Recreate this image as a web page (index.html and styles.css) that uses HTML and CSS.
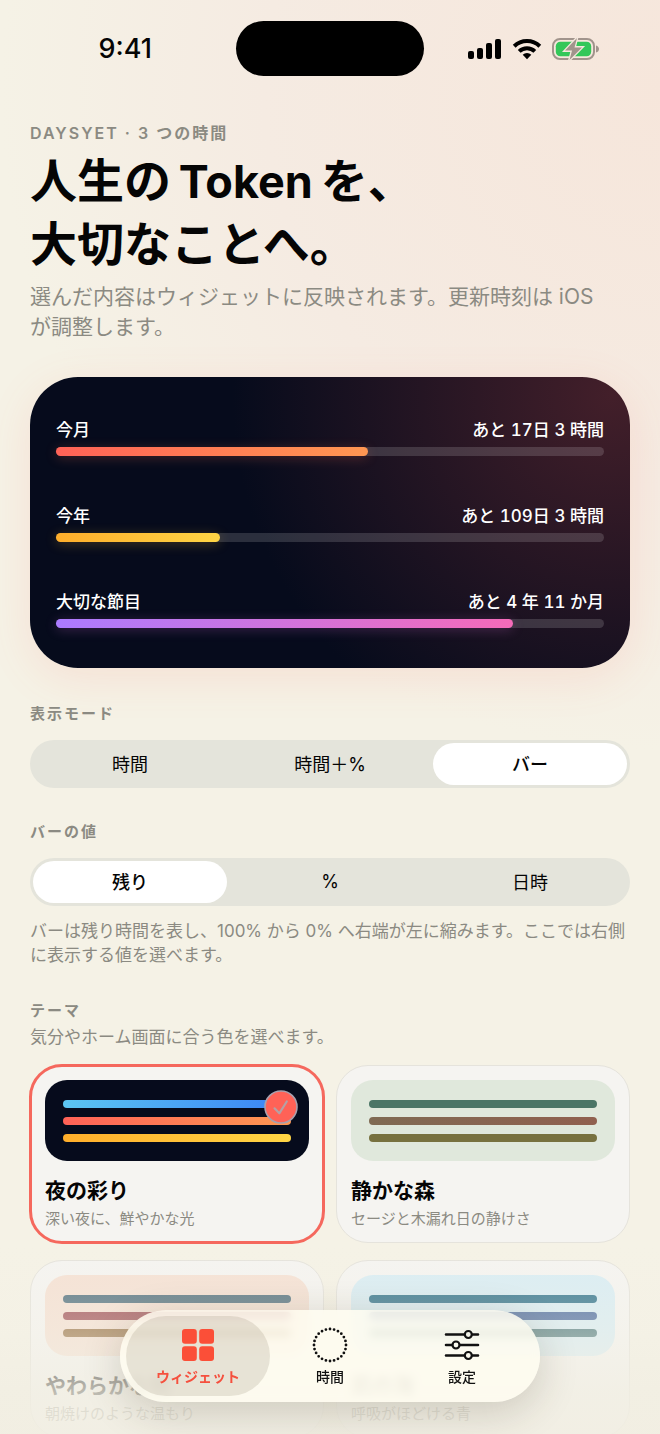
FILE: index.html
```html
<!DOCTYPE html>
<html lang="ja">
<head>
<meta charset="utf-8">
<meta name="viewport" content="width=device-width, initial-scale=1">
<title>DaysYet</title>
<link rel="stylesheet" href="styles.css">
</head>
<body>
<div class="app">
  <div class="status">
    <span class="status-time">9:41</span>
    <span class="island"></span>
    <span class="status-icons">
      <svg width="34" height="22" viewBox="0 0 34 22" aria-hidden="true">
        <rect x="0" y="13" width="6" height="8" rx="2"/>
        <rect x="9" y="10" width="6" height="11" rx="2"/>
        <rect x="18" y="5" width="6" height="16" rx="2"/>
        <rect x="27" y="1" width="6" height="20" rx="2"/>
      </svg>
      <svg width="30" height="22" viewBox="0 0 30 22" aria-hidden="true">
        <g fill="none" stroke="#000" stroke-width="4">
          <path d="M2.2 8.3a18.3 18.3 0 0 1 25.6 0"/>
          <path d="M7.2 13.4a11.2 11.2 0 0 1 15.6 0"/>
        </g>
        <path d="M15 21.2l-4.3-4.4a6.1 6.1 0 0 1 8.6 0z"/>
      </svg>
      <svg width="48" height="24" viewBox="0 0 48 24" aria-hidden="true">
        <rect x="1" y="2" width="41" height="20" rx="7" fill="none" stroke="#a1948c" stroke-width="2"/>
        <rect x="3.8" y="4.800" width="35.400" height="14.400" rx="4.500" fill="#33c759"/>
        <path d="M44 8.500c4 1 4 6 0 7z" fill="#a1948c"/>
        <path d="M25 1L13 13.600h7L17.500 23 30 10.400h-7.500z" fill="#a1948c" stroke="#f5e8dd" stroke-width="2.600" paint-order="stroke"/>
      </svg>
    </span>
  </div>

  <main class="content">
    <header class="intro">
      <p class="eyebrow">DAYSYET · 3 つの時間</p>
      <h1 class="title">人生の <span class="title-latin">Token</span> を、<br>大切なことへ。</h1>
      <p class="lead">選んだ内容はウィジェットに反映されます。更新時刻は iOS<br>が調整します。</p>
    </header>

    <section class="hero" aria-label="プレビュー">
      <div class="meter">
        <div class="meter-head"><span>今月</span><span class="meter-value">あと 17日 3 時間</span></div>
        <div class="track"><div class="fill fill-coral" style="width:57%"></div></div>
      </div>
      <div class="meter">
        <div class="meter-head"><span>今年</span><span class="meter-value">あと 109日 3 時間</span></div>
        <div class="track"><div class="fill fill-gold" style="width:30%"></div></div>
      </div>
      <div class="meter">
        <div class="meter-head"><span>大切な節目</span><span class="meter-value">あと 4 年 11 か月</span></div>
        <div class="track"><div class="fill fill-violet" style="width:83.4%"></div></div>
      </div>
    </section>

    <fieldset class="group">
      <legend class="label">表示モード</legend>
      <div class="segments">
        <label class="segment"><input type="radio" name="mode"><span>時間</span></label>
        <label class="segment"><input type="radio" name="mode"><span>時間＋%</span></label>
        <label class="segment"><input type="radio" name="mode" checked><span>バー</span></label>
      </div>
    </fieldset>

    <fieldset class="group">
      <legend class="label">バーの値</legend>
      <div class="segments">
        <label class="segment"><input type="radio" name="value" checked><span>残り</span></label>
        <label class="segment"><input type="radio" name="value"><span>%</span></label>
        <label class="segment"><input type="radio" name="value"><span>日時</span></label>
      </div>
      <p class="note">バーは残り時間を表し、100% から 0% へ右端が左に縮みます。ここでは右側に表示する値を選べます。</p>
    </fieldset>

    <fieldset class="group">
      <legend class="label">テーマ</legend>
      <p class="theme-note">気分やホーム画面に合う色を選べます。</p>
      <div class="themes">
        <label class="theme">
          <input type="radio" name="theme" checked>
          <span class="swatch night"><i></i><i></i><i></i>
            <svg class="check" viewBox="0 0 34 34" aria-hidden="true"><circle cx="17" cy="17" r="16" fill="#ff6257" stroke="#a9a0ad" stroke-width="1.6"/><path d="M10.5 18.3l4.800 5L22.800 11.500" fill="none" stroke="#b5a0a4" stroke-width="2.200" stroke-linecap="round" stroke-linejoin="round"/></svg>
          </span>
          <span class="theme-name">夜の彩り</span>
          <span class="theme-desc">深い夜に、鮮やかな光</span>
        </label>
        <label class="theme">
          <input type="radio" name="theme">
          <span class="swatch forest"><i></i><i></i><i></i></span>
          <span class="theme-name">静かな森</span>
          <span class="theme-desc">セージと木漏れ日の静けさ</span>
        </label>
        <label class="theme">
          <input type="radio" name="theme">
          <span class="swatch dawn"><i></i><i></i><i></i></span>
          <span class="theme-name">やわらかな朝</span>
          <span class="theme-desc">朝焼けのような温もり</span>
        </label>
        <label class="theme">
          <input type="radio" name="theme">
          <span class="swatch sea"><i></i><i></i><i></i></span>
          <span class="theme-name">凪の海</span>
          <span class="theme-desc">呼吸がほどける青</span>
        </label>
      </div>
    </fieldset>
  </main>

  <div class="fade"></div>
  <nav class="tabs">
    <button class="tab tab-active" type="button" aria-current="page">
      <svg width="36" height="36" viewBox="0 0 36 36" fill="#fb4f38" aria-hidden="true">
        <rect x="2" y="2" width="14.800" height="14.800" rx="3"/><rect x="19.200" y="2" width="14.800" height="14.800" rx="3"/>
        <rect x="2" y="19.200" width="14.800" height="14.800" rx="3"/><rect x="19.200" y="19.200" width="14.800" height="14.800" rx="3"/>
      </svg>
      ウィジェット
    </button>
    <button class="tab" type="button">
      <svg width="36" height="36" viewBox="0 0 36 36" fill="none" stroke="#111" aria-hidden="true">
        <circle cx="18" cy="18" r="16" stroke-width="2.800" stroke-linecap="round" pathLength="120" stroke-dasharray="0 5"/>
      </svg>
      時間
    </button>
    <button class="tab" type="button">
      <svg width="36" height="36" viewBox="0 0 36 36" fill="none" stroke="#111" stroke-width="2.600" stroke-linecap="round" aria-hidden="true">
        <path d="M2 7.500h18M28.500 7.500h5.500M2 18h6M16.500 18h17.500M2 28.500h18M28.500 28.500h5.500"/>
        <g stroke-width="2.200"><circle cx="24.300" cy="7.500" r="3.500"/><circle cx="12" cy="18" r="3.500"/><circle cx="24.300" cy="28.500" r="3.500"/></g>
      </svg>
      設定
    </button>
  </nav>
</div>
</body>
</html>
```
FILE: styles.css
```css
* { box-sizing: border-box; }

body {
  margin: 0;
  color: #050505;
  font-family: Inter, "Noto Sans CJK JP", sans-serif;
  background: #f5f2e6;
}

p, h1 { margin: 0; }

.app {
  position: relative;
  height: 100vh;
  overflow: hidden;
  display: flex;
  flex-direction: column;
  background: radial-gradient(circle 660px at 100% 90px, #f6e6db 0, #f5ebe2 60%, #f5f2e6 100%);
}

/* Status bar */
.status {
  flex: none;
  display: grid;
  grid-template-columns: 1fr 188px 1fr;
  column-gap: 44px;
  align-items: center;
  padding-top: 21px;
}
.status-time {
  justify-self: end;
  padding-right: 40px;
  font-size: 27px;
  font-weight: 500;
}
.island { height: 55px; border-radius: 28px; background: #000; }
.status-icons { display: flex; align-items: center; gap: 10px; }

/* Scrolling content */
.content {
  flex: 1;
  min-height: 0;
  overflow-y: auto;
  scrollbar-width: none;
  padding: 46px 30px 0;
}
.eyebrow, .label {
  font-size: 15px;
  line-height: 22px;
  font-weight: 600;
  letter-spacing: 2px;
  color: #8b8a82;
}
.eyebrow { font-size: 16px; }
.title {
  margin-top: 6px;
  font-size: 47px;
  line-height: 62px;
  font-weight: 600;
}
.title-latin { margin: 0 -4px; font-size: 45px; font-weight: 700; }
.lead {
  margin-top: 7px;
  font-size: 21px;
  line-height: 30px;
  color: #8b8a82;
}

/* Preview card */
.hero {
  margin-top: 35px;
  padding: 42px 26px 40px;
  display: flex;
  flex-direction: column;
  gap: 49px;
  border-radius: 48px;
  color: #fff;
  background: radial-gradient(circle 380px at 97% 6%, #431f2a 0, #060b1c 100%);
  box-shadow: 0 10px 44px rgba(255, 110, 90, .13);
}
.meter { display: flex; flex-direction: column; gap: 6px; }
.meter-head {
  display: flex;
  justify-content: space-between;
  font-size: 17px;
  line-height: 22px;
  font-weight: 500;
}
.meter-value { font-variant-numeric: tabular-nums; }
.track { height: 9px; border-radius: 5px; background: rgba(255, 255, 255, .15); }
.fill { height: 100%; border-radius: 5px; }
.fill-coral { background: linear-gradient(90deg, #ff6257, #ff9752); box-shadow: 0 2px 12px rgba(255, 110, 80, .25); }
.fill-gold { background: linear-gradient(90deg, #ffae2b, #ffd545); box-shadow: 0 2px 12px rgba(255, 190, 50, .25); }
.fill-violet { background: linear-gradient(90deg, #ab7bff, #f56bb9); box-shadow: 0 2px 12px rgba(220, 110, 220, .25); }

/* Form groups */
.group { margin: 33px 0 0; padding: 0; border: 0; min-width: 0; }
.hero + .group { margin-top: 35px; }
.label { padding: 0; }
.segments {
  display: grid;
  grid-template-columns: repeat(3, 1fr);
  column-gap: 6px;
  margin-top: 15px;
  padding: 3px;
  height: 48px;
  border-radius: 24px;
  background: #e4e4db;
}
.segment {
  position: relative;
  display: grid;
  place-items: center;
  padding-bottom: 2px;
  border-radius: 21px;
  font-size: 18px;
}
.segment:has(:checked) { background: #fff; font-weight: 500; }
.segment input, .theme input { position: absolute; opacity: 0; }
.note {
  margin-top: 13px;
  font-size: 17px;
  line-height: 24px;
  color: #8b8a82;
}
.theme-note { margin-top: 3px; font-size: 17px; line-height: 24px; color: #8b8a82; }

/* Theme cards */
.themes {
  display: grid;
  grid-template-columns: repeat(2, 1fr);
  gap: 17px 12px;
  margin-top: 16px;
  padding-bottom: 120px;
}
.theme {
  position: relative;
  display: flex;
  flex-direction: column;
  padding: 14px 14px 11px;
  border: 1px solid #e5e3dc;
  border-radius: 32px;
  background: #f5f4f1;
}
.theme:has(:checked) { outline: 3px solid #f5685d; outline-offset: -2px; }
.swatch {
  position: relative;
  display: flex;
  flex-direction: column;
  justify-content: center;
  gap: 9px;
  height: 81px;
  padding: 0 18px;
  border-radius: 22px;
}
.swatch i { height: 8px; border-radius: 4px; }
.check { position: absolute; top: 10px; right: 11px; width: 34px; height: 34px; }
.theme-name { margin-top: 14px; font-size: 21px; line-height: 32px; font-weight: 600; }
.theme-desc { font-size: 15px; line-height: 24px; color: #8b8a82; }

.night { background: #060b1c; }
.night i:nth-child(1) { background: linear-gradient(90deg, #5cc6f2, #3a82f6); }
.night i:nth-child(2) { background: linear-gradient(90deg, #ff6257, #ff9752); }
.night i:nth-child(3) { background: linear-gradient(90deg, #ffae2b, #ffd545); }
.forest { background: #e0e8dc; }
.forest i:nth-child(1) { background: #4b7566; }
.forest i:nth-child(2) { background: linear-gradient(90deg, #7f6a53, #90604f); }
.forest i:nth-child(3) { background: #77713f; }
.dawn { background: #f5e1d4; }
.dawn i:nth-child(1) { background: #587583; }
.dawn i:nth-child(2) { background: #a3565c; }
.dawn i:nth-child(3) { background: #9c764b; }
.sea { background: #d9edf4; }
.sea i:nth-child(1) { background: #387890; }
.sea i:nth-child(2) { background: #5270a2; }
.sea i:nth-child(3) { background: #568084; }

/* Bottom bar */
.fade {
  position: absolute;
  inset: auto 0 0;
  height: 190px;
  pointer-events: none;
  background: linear-gradient(rgba(243, 240, 228, 0), rgba(243, 240, 228, .36) 45%, rgba(241, 238, 226, .78) 78%, rgba(241, 238, 226, .88));
}
.tabs {
  position: absolute;
  bottom: 32px;
  left: 50%;
  transform: translateX(-50%);
  display: flex;
  padding: 6px;
  border-radius: 46px;
  background: rgba(255, 252, 240, .82);
  backdrop-filter: blur(4px);
  box-shadow: 0 10px 40px rgba(60, 50, 30, .2);
}
.tab {
  display: flex;
  flex-direction: column;
  align-items: center;
  gap: 3px;
  width: 144px;
  height: 80px;
  padding: 11px 0 0;
  border: 0;
  border-radius: 40px;
  background: none;
  color: #111;
  font: 500 14px/22px Inter, "Noto Sans CJK JP", sans-serif;
}
.tab + .tab { margin-left: -12px; }
.tab-active { background: rgba(120, 105, 80, .16); color: #f5503e; font-weight: 600; }
```
